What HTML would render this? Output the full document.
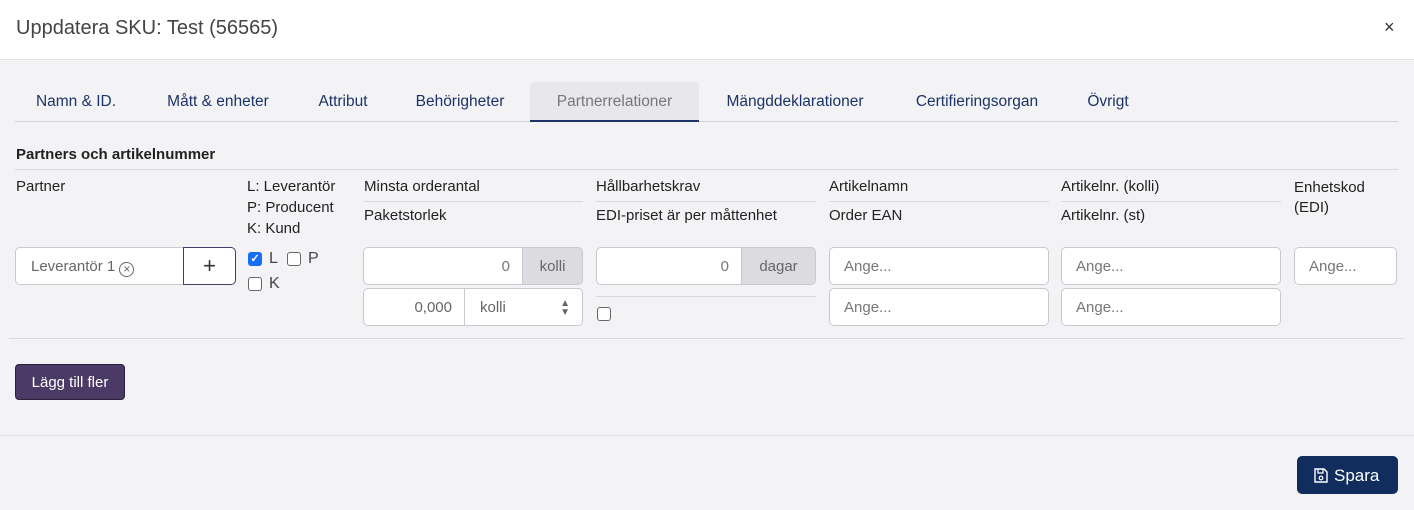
<!DOCTYPE html>
<html><head><style>
*{box-sizing:border-box;margin:0;padding:0}
body{width:1414px;height:510px;background:#f3f3f6;font-family:"Liberation Sans",sans-serif;color:#222;position:relative;overflow:hidden;font-size:15px}
.a{position:absolute;white-space:nowrap}
.hdr{position:absolute;left:0;top:0;width:1414px;height:60px;background:#fff;border-bottom:1px solid #e2e2e6}
.tab{position:absolute;top:82px;height:40px;line-height:40px;color:#1c3366;font-size:15.5px;text-align:center}
.in{position:absolute;background:#fff;border:1px solid #c9c9d0;border-radius:5px;height:38px;line-height:38px;color:#777;font-size:15px;padding:0 14px}
.addon{position:absolute;background:#dcdce0;border:1px solid #c9c9d0;height:38px;line-height:38px;color:#666;text-align:center;border-radius:0 5px 5px 0}
.cb{position:absolute;width:14px;height:14px;border:1px solid #666;border-radius:3px;background:#fff}
.hl{position:absolute;height:1px;background:#d8d8dd}
</style></head><body>
<div class="hdr"></div>
<div class="a" style="left:16px;top:17px;font-size:20px;color:#444">Uppdatera SKU: Test (56565)</div>
<div class="a" style="left:1384px;top:17px;font-size:18px;color:#333">×</div>

<div class="hl" style="left:15px;top:121px;width:1383px;background:#d0d0d6"></div>
<div class="tab" style="left:14px;width:124px">Namn &amp; ID.</div>
<div class="tab" style="left:142px;width:152px">Mått &amp; enheter</div>
<div class="tab" style="left:296px;width:94px">Attribut</div>
<div class="tab" style="left:392px;width:136px">Behörigheter</div>
<div class="tab" style="left:530px;width:169px;background:#e8e8ec;color:#777;border-bottom:2px solid #1c3366;border-radius:4px 4px 0 0">Partnerrelationer</div>
<div class="tab" style="left:701px;width:188px">Mängddeklarationer</div>
<div class="tab" style="left:891px;width:172px">Certifieringsorgan</div>
<div class="tab" style="left:1065px;width:86px">Övrigt</div>

<div class="a" style="left:16px;top:146px;font-weight:bold;font-size:15px">Partners och artikelnummer</div>
<div class="hl" style="left:15px;top:169px;width:1383px"></div>

<div class="a" style="left:16px;top:178px">Partner</div>
<div class="a" style="left:247px;top:176px;line-height:21px">L: Leverantör<br>P: Producent<br>K: Kund</div>
<div class="a" style="left:364px;top:178px">Minsta orderantal</div>
<div class="hl" style="left:364px;top:201px;width:219px"></div>
<div class="a" style="left:364px;top:207px">Paketstorlek</div>
<div class="a" style="left:596px;top:178px">Hållbarhetskrav</div>
<div class="hl" style="left:596px;top:201px;width:220px"></div>
<div class="a" style="left:596px;top:207px">EDI-priset är per måttenhet</div>
<div class="a" style="left:829px;top:178px">Artikelnamn</div>
<div class="hl" style="left:829px;top:201px;width:220px"></div>
<div class="a" style="left:829px;top:207px">Order EAN</div>
<div class="a" style="left:1061px;top:178px">Artikelnr. (kolli)</div>
<div class="hl" style="left:1061px;top:201px;width:220px"></div>
<div class="a" style="left:1061px;top:207px">Artikelnr. (st)</div>
<div class="a" style="left:1294px;top:178px;line-height:20px">Enhetskod<br>(EDI)</div>

<div class="in" style="left:15px;top:247px;width:175px;border-radius:5px 0 0 5px;color:#666;padding-left:15px">Leverantör 1 <span style="display:inline-block;width:15px;height:15px;border:1.3px solid #666;border-radius:50%;font-size:12px;line-height:12px;text-align:center;vertical-align:-2px">×</span></div>
<div class="a" style="left:183px;top:247px;width:53px;height:38px;border:1px solid #4a3a66;border-radius:0 5px 5px 0;background:#fff;text-align:center;line-height:36px;font-size:22px;color:#333">+</div>

<div class="cb" style="left:248px;top:252px;background:#1a6ef5;border-color:#1a6ef5;color:#fff;font-size:11px;line-height:12px;text-align:center;font-weight:bold">✓</div>
<div class="a" style="left:269px;top:250px;font-size:16px;color:#444">L</div>
<div class="cb" style="left:287px;top:252px"></div>
<div class="a" style="left:308px;top:250px;font-size:16px;color:#444">P</div>
<div class="cb" style="left:248px;top:277px"></div>
<div class="a" style="left:269px;top:275px;font-size:16px;color:#444">K</div>

<div class="in" style="left:363px;top:247px;width:162px;border-radius:5px 0 0 5px;text-align:right">0</div>
<div class="addon" style="left:522px;top:247px;width:61px">kolli</div>
<div class="in" style="left:363px;top:288px;width:104px;border-radius:5px 0 0 5px;text-align:right;color:#666">0,000</div>
<div class="in" style="left:464px;top:288px;width:119px;border-radius:0 5px 5px 0;color:#666;padding-left:15px">kolli<span style="position:absolute;right:12px;top:0;font-size:10px;line-height:9px;padding-top:10px">▲<br>▼</span></div>

<div class="in" style="left:596px;top:247px;width:148px;border-radius:5px 0 0 5px;text-align:right">0</div>
<div class="addon" style="left:741px;top:247px;width:75px">dagar</div>
<div class="hl" style="left:596px;top:296px;width:220px"></div>
<div class="cb" style="left:597px;top:307px"></div>

<div class="in" style="left:829px;top:247px;width:220px">Ange...</div>
<div class="in" style="left:829px;top:288px;width:220px">Ange...</div>
<div class="in" style="left:1061px;top:247px;width:220px">Ange...</div>
<div class="in" style="left:1061px;top:288px;width:220px">Ange...</div>
<div class="in" style="left:1294px;top:247px;width:103px">Ange...</div>

<div class="hl" style="left:9px;top:338px;width:1395px"></div>
<div class="a" style="left:15px;top:364px;width:110px;height:36px;background:#4b3a66;border:1px solid #2a1f3d;border-radius:4px;color:#fff;text-align:center;line-height:36px">Lägg till fler</div>

<div class="hl" style="left:0;top:435px;width:1414px;background:#e0e0e4"></div>
<div class="a" style="left:1297px;top:456px;width:101px;height:38px;background:#112d5e;border-radius:5px;color:#fff;font-size:17px;line-height:40px;padding-left:17px">
<svg width="14" height="15" viewBox="0 0 14 15" style="vertical-align:-2px;margin-right:6px"><path d="M1 1h9l3 3v10H1z" fill="none" stroke="#fff" stroke-width="1.4"/><path d="M4 1v4h5V1" fill="none" stroke="#fff" stroke-width="1.2"/><circle cx="7" cy="10" r="1.8" fill="none" stroke="#fff" stroke-width="1.2"/></svg>Spara</div>
</body></html>
